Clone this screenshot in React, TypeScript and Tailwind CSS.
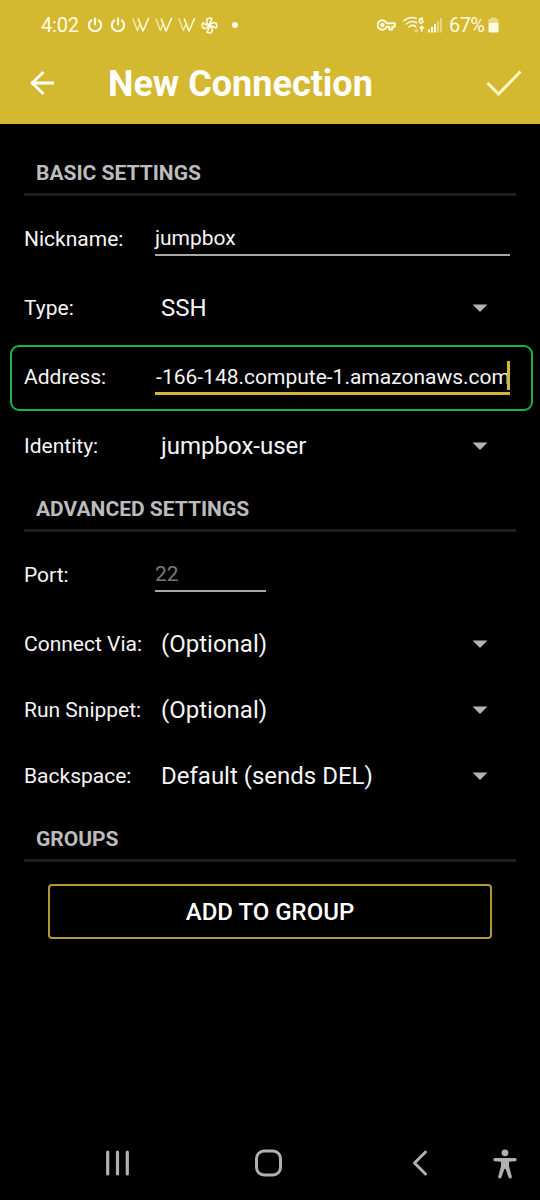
import type { ReactNode } from "react";

function Power() {
  return (
    <svg width="16" height="16" viewBox="0 0 16 16" fill="none" stroke="currentColor" strokeWidth="2.200" strokeLinecap="round">
      <path d="M4.200 3.400A6.100 6.100 0 1 0 11.800 3.400M8 1.600V7.500" />
    </svg>
  );
}

function Stripes() {
  return (
    <svg width="18" height="16" viewBox="0 0 18 16" fill="none" stroke="currentColor" strokeLinecap="round" strokeLinejoin="round">
      <path d="M1 2L5.400 13.500L7.600 8" strokeWidth="1.400" opacity=".75" />
      <path d="M6.300 2L11 14L16.500 1.500" strokeWidth="1.600" />
    </svg>
  );
}

function Fan() {
  return (
    <svg width="17" height="17" viewBox="0 0 17 17" fill="none" stroke="currentColor" strokeWidth="1.700" strokeLinejoin="round">
      <path d="M8.500 8.500C6 7 5 4 6 2.300C7 .8 10.500 1 11 2C10 3.500 9 5.500 8.500 8.500C10 6 13 5 14.700 6C16.200 7 16 10.500 15 11C13.500 10 11.500 9 8.500 8.500C11 10 12 13 11 14.700C10 16.200 6.500 16 6 15C7 13.500 8 11.500 8.500 8.500C7 11 4 12 2.300 11C.8 10 1 6.500 2 6C3.500 7 5.500 8 8.500 8.500Z" />
    </svg>
  );
}

function StatusBar() {
  return (
    <div className="flex h-[50px] items-center pr-[40px] pl-[41px] text-[20px] leading-none text-[#fffbe2]">
      <span className="w-[46px] tracking-[-0.2px]">4:02</span>
      <Power />
      <span className="ml-[7px] flex"><Power /></span>
      <span className="ml-[6px] flex gap-[5px]"><Stripes /><Stripes /><Stripes /></span>
      <span className="ml-[5px] flex"><Fan /></span>
      <span className="ml-[14px] size-[6px] rounded-full bg-[#fffbe2]" />
      <span className="flex-1" />
      <svg width="19" height="12" viewBox="0 0 19 12" fill="none" stroke="currentColor" strokeWidth="1.900" strokeLinejoin="round">
        <path d="M9.600 4.200A4.700 4.700 0 1 0 9.600 7.800H12.300V10.500H15.300V7.800H17.900V4.200Z" />
        <circle cx="5.400" cy="6" r="1.300" />
      </svg>
      <svg className="ml-[7px]" width="22" height="18" viewBox="0 0 22 18" fill="none" stroke="currentColor" strokeLinecap="round">
        <path d="M1 4.800C4.500 1.400 9 .8 13 2.300M3.500 8C6.500 5.200 10.500 5 13.500 6.800M6 11C8 9.300 10.800 9.200 12.500 10.500" strokeWidth="1.600" />
        <path d="M19.500 2C17 2 16.200 3.500 16.200 5.300A1.800 1.800 0 1 0 17.200 3.700" strokeWidth="1.500" />
        <path d="M18.700 15V10.500M17 12L18.700 10.300L20.400 12" strokeWidth="1.600" />
        <path d="M13.200 12V16M11.500 14.500L13.200 16.200L14.900 14.500" strokeWidth="1.500" opacity=".45" />
      </svg>
      <svg className="ml-[3px]" width="15" height="16" viewBox="0 0 15 16" fill="currentColor">
        <rect x="0" y="12.500" width="2" height="3" />
        <rect x="3" y="10" width="2" height="5.500" />
        <rect x="6" y="7" width="2" height="8.500" />
        <rect x="9" y="4" width="2" height="11.500" opacity=".45" />
        <rect x="12" y="1" width="2" height="14.500" opacity=".45" />
      </svg>
      <span className="ml-[6px] w-[37px] tracking-[-0.6px]">67%</span>
      <svg className="mr-px ml-[2px]" width="11" height="16" viewBox="0 0 11 16" fill="currentColor">
        <path d="M.5 6V3Q.5 1.500 3 1.500V.5H8V1.500Q10.500 1.500 10.500 3V6Z" opacity=".5" />
        <path d="M.5 6H10.500V14Q10.500 15.500 9 15.500H2Q.5 15.500 .5 14Z" />
      </svg>
    </div>
  );
}

function Section({ title, className = "" }: { title: string; className?: string }) {
  return (
    <div className={`mx-6 border-b-3 border-[#1e1e1e] pb-2 pl-3 ${className}`}>
      <h2 className="text-[21px] leading-6 font-bold text-[#bcbcbc]">{title}</h2>
    </div>
  );
}

function Row({ label, children, className = "h-[69px]" }: { label: string; children: ReactNode; className?: string }) {
  return (
    <div className={`flex items-center pl-6 ${className}`}>
      <span className="w-[131px] shrink-0 text-[21px] leading-6 whitespace-nowrap">{label}</span>
      {children}
    </div>
  );
}

function Select({ value }: { value: string }) {
  return (
    <div className="flex w-[355px] items-center justify-between pr-[22px] pl-[6px]">
      <span className="text-[24px] leading-7">{value}</span>
      <svg width="16" height="8" viewBox="0 0 16 8"><path d="M.5 .5H15.500L8 8Z" fill="#b3b3b3" /></svg>
    </div>
  );
}

export default function App() {
  return (
    <div className="flex h-[1200px] w-[540px] flex-col overflow-hidden bg-black font-['Roboto',sans-serif] text-[#f5f5f5]">
      <header className="h-[124px] bg-[#d4b830]">
        <StatusBar />
        <div className="flex h-[66px] items-center text-white">
          <svg className="ml-[30px]" width="24" height="24" viewBox="0 0 24 24" fill="none" stroke="currentColor" strokeWidth="2.800" strokeLinejoin="round">
            <path d="M12.500 2L2.200 12L12.500 22M2.200 12H22.500" strokeLinecap="square" />
          </svg>
          <h1 className="mt-[2px] ml-[54px] text-[36px] leading-10 font-bold">New Connection</h1>
          <svg className="mr-[18px] ml-auto" width="36" height="28" viewBox="0 0 36 28" fill="none" stroke="#fff6c8" strokeWidth="3">
            <path d="M1.500 14L12.500 25L34.500 2.500" />
          </svg>
        </div>
      </header>
      <main className="flex-1">
        <Section title="BASIC SETTINGS" className="mt-[37px] mb-2" />
        <Row label="Nickname:">
          <div className="mb-px h-[36px] w-[355px] border-b-2 border-[#a8a8a8] pt-[6px] text-[21px]">
            <span className="block leading-6">jumpbox</span>
          </div>
        </Row>
        <Row label="Type:"><Select value="SSH" /></Row>
        <div className="relative">
          <div className="absolute top-[3px] left-[10px] h-[66px] w-[523px] rounded-[9px] border-2 border-[#20b04b]" />
          <Row label="Address:">
            <div className="mb-[11px] flex h-[48px] w-[355px] justify-end overflow-hidden border-b-3 border-[#d4b436] text-[21px]">
              <span className="mt-[18px] leading-6 whitespace-nowrap">-166-148.compute-1.amazonaws.com</span>
              <span className="mt-[14px] -ml-[3px] h-[29px] w-[3px] shrink-0 bg-[#d4b830]" />
            </div>
          </Row>
        </div>
        <Row label="Identity:"><Select value="jumpbox-user" /></Row>
        <Section title="ADVANCED SETTINGS" className="mt-[17px] mb-2" />
        <Row label="Port:">
          <div className="mb-px h-[36px] w-[111px] border-b-2 border-[#a8a8a8] pt-[6px] text-[21px] text-[#777]">
            <span className="block leading-6">22</span>
          </div>
        </Row>
        <Row label="Connect Via:" className="mt-[2px] h-[66px]"><Select value="(Optional)" /></Row>
        <Row label="Run Snippet:" className="h-[66px]"><Select value="(Optional)" /></Row>
        <Row label="Backspace:" className="h-[66px]"><Select value="Default (sends DEL)" /></Row>
        <Section title="GROUPS" className="mt-[18px]" />
        <button className="mx-12 mt-[22px] block h-[55px] w-[444px] rounded-[4px] border-2 border-[#b09a35] text-[24px] font-medium text-white">
          ADD TO GROUP
        </button>
      </main>
      <nav className="flex h-[75px] items-center text-[#b0b0b0]">
        <svg className="ml-[105px]" width="26" height="28" viewBox="0 0 26 28" stroke="currentColor" strokeWidth="3.200" strokeLinecap="round">
          <path d="M2.700 3V25M12.500 3V25M22.300 3V25" />
        </svg>
        <svg className="ml-[123px]" width="28" height="28" viewBox="0 0 28 28" fill="none" stroke="currentColor" strokeWidth="3">
          <rect x="2.500" y="2" width="24" height="24" rx="7.500" />
        </svg>
        <svg className="ml-[129px]" width="18" height="28" viewBox="0 0 18 28" fill="none" stroke="currentColor" strokeWidth="3" strokeLinecap="round" strokeLinejoin="round">
          <path d="M14.500 3L3.500 14L14.500 25" />
        </svg>
        <svg className="mt-[2px] ml-[64px]" width="24" height="30" viewBox="0 0 24 30" fill="currentColor">
          <circle cx="12" cy="3.800" r="3.400" />
          <path d="M2 9H22Q23.700 9 23.700 10.700Q23.700 12.200 22 12.300L16 12.800V17L18.800 27.500Q19 29.500 17.300 29.500Q16 29.500 15.400 28L12.600 20H11.400L8.600 28Q8 29.500 6.700 29.500Q5 29.500 5.200 27.500L8 17V12.800L2 12.300Q.3 12.200 .3 10.700Q.3 9 2 9Z" />
        </svg>
      </nav>
    </div>
  );
}
